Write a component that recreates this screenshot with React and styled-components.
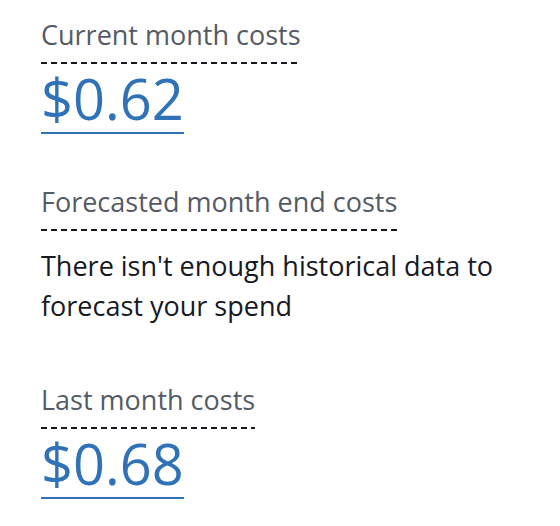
import React from "react";
import styled, { createGlobalStyle } from "styled-components";

const Global = createGlobalStyle`
  body {
    margin: 0;
    background: #ffffff;
    font-family: "Open Sans", "Noto Sans", sans-serif;
  }
`;

const Panel = styled.div`
  display: flex;
  flex-direction: column;
  gap: 41px;
  padding: 8px 0 0 41px;
`;

const Stat = styled.div`
  display: flex;
  flex-direction: column;
  align-items: flex-start;
`;

// dashed underline drawn as a repeating gradient: 6px dash, 4px gap
const Label = styled.span`
  font-size: 27px;
  line-height: 54px;
  padding-bottom: 2px;
  color: #545b64;
  background: linear-gradient(to right, #16191f 6px, transparent 6px) left bottom / 10px 2px repeat-x;
`;

const Amount = styled.a`
  font-size: 56px;
  line-height: 68px;
  color: #2f72b8;
  text-decoration: none;
  border-bottom: 2px solid #2f72b8;
`;

const Note = styled.p`
  margin: 15px 0 6px;
  font-size: 27px;
  line-height: 40px;
  color: #16191f;
  max-width: 480px;
`;

export default function App() {
  return (
    <>
      <Global />
      <Panel>
        <Stat>
          <Label>Current month costs</Label>
          <Amount href="#">$0.62</Amount>
        </Stat>
        <Stat>
          <Label>Forecasted month end costs</Label>
          <Note>There isn't enough historical data to forecast your spend</Note>
        </Stat>
        <Stat>
          <Label>Last month costs</Label>
          <Amount href="#">$0.68</Amount>
        </Stat>
      </Panel>
    </>
  );
}
